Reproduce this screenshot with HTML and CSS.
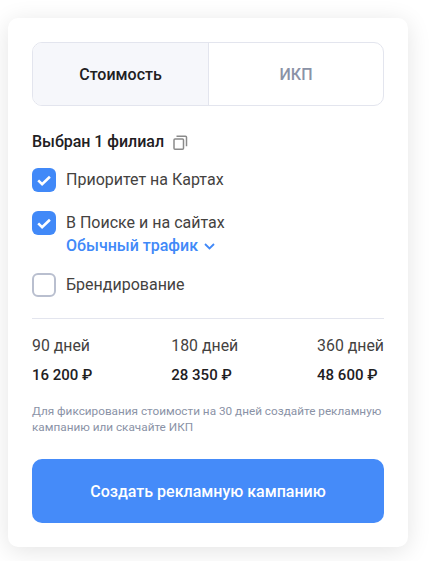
FILE: index.html
```html
<!DOCTYPE html>
<html lang="ru">
<head>
<meta charset="utf-8">
<title>Стоимость</title>
<link rel="stylesheet" href="styles.css">
</head>
<body>
<main class="card">
  <div class="tabs">
    <div class="tab tab-active">Стоимость</div>
    <div class="tab">ИКП</div>
  </div>
  <div class="branch">
    <span>Выбран 1 филиал</span>
    <svg class="copy" width="15" height="15" viewBox="0 0 15 15" fill="none" stroke="#8a8a8a" stroke-width="1.5"><rect x="1" y="4" width="9.5" height="10.2" rx="1"/><path d="M3.5 1.2h9a1 1 0 0 1 1 1v9"/></svg>
  </div>
  <div class="option option-first">
    <span class="box box-on"><svg width="24" height="24" viewBox="0 0 24 24" fill="none" stroke="#fff" stroke-width="2.6"><path d="M6.2 12.4l3.9 3.7 7.8-7.4"/></svg></span>
    <span class="label">Приоритет на Картах</span>
  </div>
  <div class="option option-two">
    <span class="box box-on"><svg width="24" height="24" viewBox="0 0 24 24" fill="none" stroke="#fff" stroke-width="2.6"><path d="M6.2 12.4l3.9 3.7 7.8-7.4"/></svg></span>
    <div class="label-stack">
      <span class="label">В Поиске и на сайтах</span>
      <span class="link">Обычный трафик <svg width="11" height="7" viewBox="0 0 11 7" fill="none" stroke="#4189f8" stroke-width="1.8"><path d="M1 1l4.5 4.5L10 1"/></svg></span>
    </div>
  </div>
  <div class="option option-last">
    <span class="box"></span>
    <span class="label">Брендирование</span>
  </div>
  <div class="prices">
    <div class="price"><div class="days">90 дней</div><div class="sum">16 200 ₽</div></div>
    <div class="price"><div class="days">180 дней</div><div class="sum">28 350 ₽</div></div>
    <div class="price"><div class="days">360 дней</div><div class="sum">48 600 ₽</div></div>
  </div>
  <p class="note">Для фиксирования стоимости на 30 дней создайте рекламную кампанию или скачайте ИКП</p>
  <button class="cta" type="button">Создать рекламную кампанию</button>
</main>
</body>
</html>
```
FILE: styles.css
```css
* { box-sizing: border-box; }
html, body { margin: 0; height: 100%; }
body {
  background: #fff;
  padding: 18px 26px 14px 8px;
  font-family: Roboto, "Noto Sans", sans-serif;
  color: #21201f;
  overflow: hidden;
}
.card {
  width: 400px;
  height: 529px;
  padding: 24px;
  background: #fff;
  border-radius: 10px;
  box-shadow: 0 4px 24px rgba(0, 0, 0, 0.11);
}
.tabs {
  display: flex;
  height: 64px;
  border: 1px solid #e3e5ee;
  border-radius: 10px;
  overflow: hidden;
}
.tab {
  display: flex;
  align-items: center;
  justify-content: center;
  flex: 1 1 0;
  font-size: 16px;
  font-weight: 500;
  color: #8a92a6;
}
.tab-active {
  flex: 0 0 176px;
  background: #f6f7fb;
  color: #21201f;
  border-right: 1px solid #e3e5ee;
}
.branch {
  display: flex;
  align-items: center;
  gap: 9px;
  height: 20px;
  margin-top: 25px;
  font-size: 16px;
  font-weight: 500;
  letter-spacing: -0.03px;
}
.copy { margin-top: 2px; }
.option { display: flex; gap: 10px; }
.option-first { margin-top: 17px; align-items: center; }
.option-two { margin-top: 19px; }
.option-last { margin-top: 18px; align-items: center; }
.box {
  flex: none;
  width: 24px;
  height: 24px;
  border: 2px solid #b9bfcf;
  border-radius: 6px;
  background: #fff;
}
.box svg { display: block; }
.box-on { border: 0; background: #4189f8; }
.label { font-size: 16px; line-height: 24px; color: #44423f; }
.label-stack { display: flex; flex-direction: column; }
.link {
  display: flex;
  align-items: center;
  gap: 6px;
  height: 20px;
  font-size: 16px;
  font-weight: 500;
  color: #4189f8;
}
.link svg { margin-top: 3px; }
.prices {
  display: flex;
  justify-content: space-between;
  margin-top: 21px;
  padding-top: 16px;
  border-top: 1px solid #e3e5ee;
}
.days { font-size: 15.85px; line-height: 22px; color: #44423f; }
.sum { margin-top: 7px; font-size: 15px; line-height: 22px; font-weight: 500; }
.note {
  margin: 17px 0 0;
  font-size: 11.75px;
  line-height: 16px;
  color: #8a92a6;
}
.cta {
  display: block;
  width: 100%;
  height: 64px;
  margin-top: 24px;
  border: 0;
  border-radius: 10px;
  background: #458bf9;
  color: #fff;
  font: 500 16px Roboto, "Noto Sans", sans-serif;
}
```
